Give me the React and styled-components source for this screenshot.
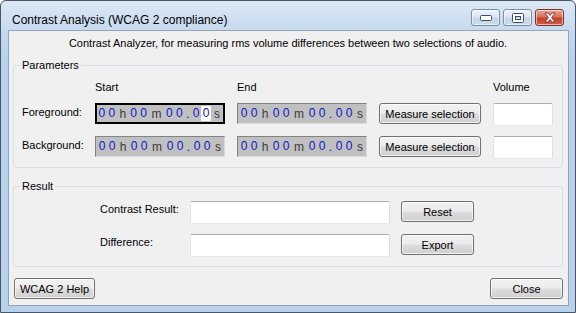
import styled, { createGlobalStyle } from "styled-components";

const GlobalStyle = createGlobalStyle`
  html, body {
    margin: 0;
    padding: 0;
    background: #ffffff;
  }
  * {
    box-sizing: border-box;
  }
`;

// digits / units of the hh mm ss.ss control
const TimeField = ({ focused }) => {
  const parts = ["0", "0", "h", "0", "0", "m", "0", "0", ".", "0", "0", "s"];
  return (
    <TimeBox $focused={focused}>
      {parts.map((c, i) => {
        if (c === "h" || c === "m" || c === "s")
          return (
            <Unit key={i} $w={c === "m" ? 16 : 12}>
              {c}
            </Unit>
          );
        if (c === ".") return <Dot key={i}>.</Dot>;
        return (
          <Digit key={i} $active={focused && i === 10}>
            {c}
          </Digit>
        );
      })}
    </TimeBox>
  );
};

const App = () => {
  return (
    <>
      <GlobalStyle />
      <Window>
        <TitleBar>
          <Title>Contrast Analysis (WCAG 2 compliance)</Title>
          <CaptionButtons>
            <CaptionButton>
              <svg width="12" height="6" viewBox="0 0 12 6">
                <rect x="0.5" y="0.5" width="11" height="5" rx="1" fill="#fff" stroke="#3d4f66" />
              </svg>
            </CaptionButton>
            <CaptionButton>
              <svg width="12" height="10" viewBox="0 0 12 10">
                <rect x="0.5" y="0.5" width="11" height="9" rx="1" fill="#fff" stroke="#3d4f66" />
                <rect x="3.5" y="3.5" width="5" height="3" fill="#d5e0ee" stroke="#3d4f66" />
              </svg>
            </CaptionButton>
            <CaptionButton $close>
              <svg width="14" height="11" viewBox="0 0 14 11">
                <path
                  d="M2 1 L5 1 L7 3.5 L9 1 L12 1 L8.6 5.5 L12 10 L9 10 L7 7.5 L5 10 L2 10 L5.4 5.5 Z"
                  fill="#fff"
                  stroke="#6b2a20"
                  strokeWidth="0.8"
                  strokeLinejoin="round"
                />
              </svg>
            </CaptionButton>
          </CaptionButtons>
        </TitleBar>

        <Client>
          <Intro>
            Contrast Analyzer, for measuring rms volume differences between two selections of audio.
          </Intro>

          <Group>
            <Legend>Parameters</Legend>
            <ParamGrid>
              <span />
              <Label>Start</Label>
              <Label>End</Label>
              <span />
              <Label>Volume</Label>

              <Label $pad={2}>Foreground:</Label>
              <TimeField focused />
              <TimeField />
              <Button>Measure selection</Button>
              <TextInput $h={23} />

              <Label $pad={2}>Background:</Label>
              <TimeField />
              <TimeField />
              <Button>Measure selection</Button>
              <TextInput $h={23} />
            </ParamGrid>
          </Group>

          <Group $gapTop>
            <Legend>Result</Legend>
            <ResultGrid>
              <Label $pad={1}>Contrast Result:</Label>
              <TextInput $h={23} />
              <Button>Reset</Button>

              <Label $pad={1}>Difference:</Label>
              <TextInput $h={23} />
              <Button>Export</Button>
            </ResultGrid>
          </Group>

          <Footer>
            <Button $w={81}>WCAG 2 Help</Button>
            <Button $w={73}>Close</Button>
          </Footer>
        </Client>
      </Window>
    </>
  );
};

const Window = styled.div`
  width: 576px;
  height: 313px;
  display: flex;
  flex-direction: column;
  border: 1px solid #4a5566;
  border-radius: 6px 6px 0 0;
  padding: 0 6px 6px 7px;
  background: linear-gradient(180deg, #dce8f5 0px, #c6d9ee 30px, #b9d1ea 60px, #b9d1ea 100%);
  font-family: "Liberation Sans", Arial, sans-serif;
  font-size: 11px;
  color: #000;
`;

const TitleBar = styled.div`
  height: 29px;
  display: flex;
  align-items: flex-start;
  justify-content: space-between;
  padding-left: 4px;
`;

const Title = styled.div`
  font-size: 12px;
  line-height: 15px;
  margin-top: 12px;
  color: #000;
`;

const CaptionButtons = styled.div`
  display: flex;
  gap: 3px;
  margin-top: 8px;
  margin-right: 5px;
`;

const CaptionButton = styled.div`
  width: 29px;
  height: 17px;
  display: flex;
  align-items: center;
  justify-content: center;
  border: 1px solid ${(p) => (p.$close ? "#7d3328" : "#7b8ea6")};
  border-radius: 3px;
  background: ${(p) =>
    p.$close
      ? "linear-gradient(180deg, #eba595 0%, #d9715d 45%, #c2402c 55%, #d25e48 100%)"
      : "linear-gradient(180deg, #eef3fa 0%, #dbe5f2 45%, #c4d4e8 55%, #cddbec 100%)"};
  box-shadow: inset 0 0 0 1px rgba(255, 255, 255, 0.55);
`;

const Client = styled.div`
  flex: 1;
  display: flex;
  flex-direction: column;
  background: #f0f0f0;
  border: 1px solid #8fa4bf;
  padding: 0 5px 0 4px;
`;

const Intro = styled.div`
  text-align: center;
  line-height: 14px;
  padding: 5px 0 8px;
`;

const Group = styled.fieldset`
  margin: ${(p) => (p.$gapTop ? "11px" : "0")} 0 0;
  padding: 8px 8px 9px;
  border: 1px solid #d5dfe5;
  border-radius: 3px;
  min-width: 0;
`;

const Legend = styled.legend`
  padding: 0 2px;
  margin-left: -2px;
  line-height: 14px;
`;

const ParamGrid = styled.div`
  display: grid;
  grid-template-columns: 61px 130px 130px 102px 60px;
  grid-template-rows: 12px 22px 22px;
  column-gap: 12px;
  row-gap: 11px;
  align-items: start;
`;

const ResultGrid = styled.div`
  display: grid;
  grid-template-columns: 79px 200px 73px;
  column-gap: 11px;
  row-gap: 10px;
  align-items: start;
  padding-left: 78px;
`;

const Label = styled.span`
  white-space: nowrap;
  line-height: 14px;
  padding-top: ${(p) => p.$pad || 0}px;
`;

const TimeBox = styled.div`
  height: 21px;
  display: flex;
  align-items: center;
  background: #c0c0c0;
  border-style: solid;
  border-width: ${(p) => (p.$focused ? "2px" : "1px")};
  border-color: ${(p) => (p.$focused ? "#000" : "#828282 #dadada #dadada #828282")};
  padding-left: ${(p) => (p.$focused ? "0" : "1px")};
  font-size: 12px;
  overflow: hidden;
`;

const Digit = styled.span`
  width: 10px;
  height: 15px;
  line-height: 15px;
  text-align: center;
  color: #1414c8;
  background: ${(p) => (p.$active ? "#ffffff" : "transparent")};
`;

const Unit = styled.span`
  width: ${(p) => p.$w}px;
  text-align: center;
  color: #3a3a3a;
`;

const Dot = styled.span`
  width: 7px;
  text-align: center;
  color: #1414c8;
`;

const TextInput = styled.div`
  height: ${(p) => p.$h}px;
  background: #fff;
  border: 1px solid;
  border-color: #abadb3 #dbdfe6 #e3e9ef #e2e3ea;
  border-radius: 2px;
`;

const Button = styled.button`
  width: ${(p) => (p.$w ? `${p.$w}px` : "auto")};
  height: 21px;
  padding: 0 4px;
  font-family: inherit;
  font-size: 11px;
  color: #000;
  border: 1px solid #707070;
  border-radius: 3px;
  background: linear-gradient(180deg, #f2f2f2 0%, #ebebeb 48%, #dddddd 52%, #cfcfcf 100%);
  box-shadow: inset 0 0 0 1px rgba(255, 255, 255, 0.7);
`;

const Footer = styled.div`
  display: flex;
  justify-content: space-between;
  margin-top: 11px;
  padding-left: 1px;
`;

export default App;
